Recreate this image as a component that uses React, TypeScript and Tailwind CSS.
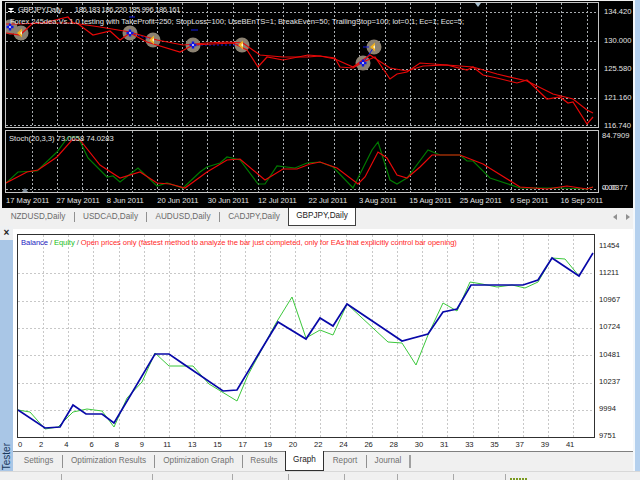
const priceLabels = ["134.420", "130.000", "125.580", "121.160", "116.740"]
const dates = ["17 May 2011", "27 May 2011", "8 Jun 2011", "20 Jun 2011", "30 Jun 2011", "12 Jul 2011", "22 Jul 2011", "3 Aug 2011", "15 Aug 2011", "25 Aug 2011", "6 Sep 2011", "16 Sep 2011"]
const symbolTabs = [
  { name: "NZDUSD,Daily", w: "w-[72px]" },
  { name: "USDCAD,Daily", w: "w-[71px]" },
  { name: "AUDUSD,Daily", w: "w-[72px]" },
  { name: "CADJPY,Daily", w: "w-[68px]" },
]
const balanceLabels = ["11454", "11211", "10967", "10724", "10481", "10237", "9994", "9751"]
const tradeLabels = ["2", "4", "6", "8", "9", "11", "13", "15", "17", "19", "20", "22", "24", "26", "28", "30", "31", "33", "35", "37", "39", "41"]
const statusCells = ["w-[62px]", "w-[91px]", "w-[80px]", "w-[56px]", "w-[56px]", "w-[53px]", "w-[56px]", "w-[52px]"]

const gridX = [32, 57, 82, 107, 132, 157, 182, 207, 233, 258, 283, 308, 334, 359, 385, 410, 435, 460, 486, 511, 536, 561, 587]
const testerGridX = [43, 68, 93, 119, 144, 169, 194, 220, 245, 270, 295, 320, 346, 372, 397, 422, 447, 473, 498, 523, 548, 573]
const testerGridY = [273, 301, 328, 355, 383, 410]

const priceA = "6,24 17,24 43,23 68,17 73,23 100,27 130,32 157,40 183,45 207,43 227,42 243,43 260,55 283,57 308,57 320,56 335,59 353,67 370,55 390,68 407,71 423,66 447,65 473,67 497,74 527,81 553,94 573,99 587,110 593,113"
const priceB = "6,33 20,35 33,23 77,23 93,35 110,31 120,40 130,33 147,42 180,52 193,45 233,43 247,50 258,67 267,57 283,60 308,55 320,56 335,58 340,67 353,68 363,62 375,57 390,79 397,74 407,72 420,63 447,65 467,70 473,67 483,75 497,78 517,83 527,80 547,99 560,97 568,103 573,102 587,124 593,117"
const stochGreen = "6,183 18,172 37,171 57,152 68,137 78,137 88,158 107,177 113,176 120,182 138,168 157,186 167,183 183,188 200,172 207,167 220,163 227,157 240,160 258,184 265,184 277,166 295,168 307,163 320,162 333,167 353,188 372,150 378,142 390,180 397,184 407,178 428,150 440,155 460,155 467,161 473,161 490,178 520,188 533,188 560,188 587,189 593,187"
const stochRed = "6,183 27,172 38,170 57,157 72,140 80,140 100,165 120,178 140,172 157,183 170,184 185,188 207,172 227,160 240,159 265,180 283,169 297,169 310,164 320,162 337,168 358,184 365,177 378,152 387,158 397,175 407,178 420,167 432,155 460,155 483,164 520,187 547,189 567,186 587,189 593,187"
const balance = "18,410 45,428 60,427 73,405 86,414 102,414 114,423 155,354 169,354 182,363 223,391 237,390 258,355 278,322 306,339 320,318 333,326 347,304 402,341 428,334 443,312 457,309 471,285 523,285 538,280 552,258 579,276 593,253"
const equity = "18,410 30,412 45,429 58,427 73,412 87,409 102,411 114,427 127,398 142,382 155,353 169,366 193,366 209,384 237,401 248,375 276,323 292,297 306,338 320,330 333,335 347,304 388,342 402,343 416,365 428,335 443,303 457,311 470,282 482,284 497,287 512,285 525,288 538,282 552,258 565,259 579,276"

function BlueMark({ x, y }: { x: number; y: number }) {
  return (
    <g>
      <path d={`M${x - 3.5} ${y}H${x + 3.5}M${x} ${y - 3.5}V${y + 3.5}`} stroke="#0a14e6" strokeWidth="2.4" />
      <circle cx={x} cy={y} r="0.9" fill="#ffffff" />
    </g>
  )
}

function SellMark({ x, y }: { x: number; y: number }) {
  return (
    <g>
      <polygon points={`${x - 3},${y} ${x + 2},${y - 4.5} ${x + 2},${y + 4.5}`} fill="#f0b020" />
      <polygon points={`${x},${y} ${x + 2},${y - 2} ${x + 2},${y + 2}`} fill="#fff4c0" />
    </g>
  )
}

function PriceChart() {
  const circles = [[10, 27], [21, 33], [130, 33], [153, 40], [193, 45], [242, 45], [363, 63], [374, 47]]
  return (
    <svg width="592" height="124" viewBox="6 3 592 124" className="block">
      {gridX.map((x) => <line key={x} x1={x + 0.5} x2={x + 0.5} y1="3" y2="127" stroke="#a8acb0" strokeDasharray="2 2" />)}
      {[12, 41, 69, 98, 125].map((y) => <line key={y} x1="6" x2="598" y1={y + 0.5} y2={y + 0.5} stroke="#a8acb0" strokeDasharray="2 2" />)}
      {circles.map(([x, y]) => <circle key={x} cx={x} cy={y} r="7.5" fill="#8c8272" />)}
      <path d="M130 33L153 40M193 45H242" stroke="#1018e0" strokeDasharray="2 2" fill="none" />
      <path d="M191 30H198M129 17H135M363 47H369M363 63L374 47" stroke="#1018e0" fill="none" />
      <polyline points={priceA} fill="none" stroke="#e80808" strokeWidth="1.2" />
      <polyline points={priceB} fill="none" stroke="#e80808" strokeWidth="1.2" />
      <BlueMark x={10} y={27} />
      <SellMark x={20} y={33} />
      <BlueMark x={130} y={33} />
      <SellMark x={152} y={40} />
      <BlueMark x={193} y={45} />
      <SellMark x={241} y={45} />
      <BlueMark x={363} y={63} />
      <SellMark x={373} y={47} />
      <polygon points="475,3 481,3 478,7" fill="#a8c0d0" />
    </svg>
  )
}

function StochChart() {
  return (
    <svg width="592" height="61" viewBox="6 131 592 61" className="block">
      {gridX.map((x) => <line key={x} x1={x + 0.5} x2={x + 0.5} y1="131" y2="192" stroke="#a8acb0" strokeDasharray="2 2" />)}
      <line x1="6" x2="598" y1="189.5" y2="189.5" stroke="#a8acb0" strokeDasharray="2 2" />
      <polygon points="22,192 28,192 25,188" fill="#8090a0" />
      <polyline points={stochGreen} fill="none" stroke="#007a00" strokeWidth="1.2" />
      <polyline points={stochRed} fill="none" stroke="#e80808" strokeWidth="1.2" />
    </svg>
  )
}

function TesterChart() {
  return (
    <svg width="576" height="202" viewBox="18 235 576 202" className="block">
      {testerGridX.map((x) => <line key={x} x1={x + 0.5} x2={x + 0.5} y1="235" y2="437" stroke="#c8c8c8" strokeDasharray="2 2" />)}
      {testerGridY.map((y) => <line key={y} x1="18" x2="594" y1={y + 0.5} y2={y + 0.5} stroke="#c8c8c8" strokeDasharray="2 2" />)}
      <polyline points={equity} fill="none" stroke="#3cc83c" strokeWidth="1" />
      <polyline points={balance} fill="none" stroke="#0808a8" strokeWidth="1.7" />
    </svg>
  )
}

export default function App() {
  return (
    <div className="flex h-[480px] w-[640px] flex-col overflow-hidden bg-[#f0f0f0] font-['Liberation_Sans',sans-serif] text-[7.6px]">
      <div className="flex h-[471px] shrink-0">
        <div className="flex w-[633px] shrink-0 flex-col">
          <div className="ml-[2px] mt-[1px] flex h-[207px] shrink-0 flex-col bg-black pl-[3px] pt-[1px] text-[#e4e4e4]">
            <div className="flex h-[126px] shrink-0">
              <div className="relative h-[126px] w-[594px] shrink-0 border border-[#c4c4c4]">
                <PriceChart />
                <div className="absolute left-[2px] top-[1px] flex items-center whitespace-nowrap tracking-[-0.35px]">
                  <span className="block h-[4px] w-[6px] border-b border-white">
                    <svg width="6" height="3" viewBox="0 0 6 3" className="block"><polygon points="0,0 6,0 3,3" fill="#ffffff" /></svg>
                  </span>
                  <span className="ml-[4px]">GBPJPY,Daily</span>
                  <span className="ml-[13px]">186.183 186.220 185.996 186.161</span>
                </div>
                <div className="absolute left-[4px] top-[13px] whitespace-nowrap tracking-[-0.04px]">Forex 245dea Vs.1.0 testing with TakeProfit=250; StopLoss=100; UseBEnTS=1; BreakEven=50; TrailingStop=100; lot=0.1; Ec=1; Ecc=5;</div>
              </div>
              <div className="ml-[5px] mt-[5px] flex h-[123px] flex-col justify-between leading-[9px]">
                {priceLabels.map((p) => <span key={p}>{p}</span>)}
              </div>
            </div>
            <div className="mt-[2px] flex h-[63px] shrink-0">
              <div className="relative h-[63px] w-[594px] shrink-0 border border-[#c4c4c4]">
                <StochChart />
                <div className="absolute left-[3px] top-[2px] whitespace-nowrap">Stoch(20,3,3) 73.0658 74.0283</div>
              </div>
              <div className="relative ml-[3px] flex h-[62px] flex-col justify-between pt-[1px] leading-[9px]">
                <span>84.7909</span>
                <span>-0.0377</span>
                <span className="absolute bottom-0 left-0">0.00</span>
              </div>
            </div>
            <div className="ml-[1px] mt-[3px] grid w-[605px] grid-cols-12 leading-[10px] whitespace-nowrap">
              {dates.map((d) => <span key={d}>{d}</span>)}
            </div>
          </div>

          <div className="flex h-[18px] shrink-0 items-stretch pl-[2px] text-[8.2px] text-[#6a6a6a]">
            {symbolTabs.map((t) => (
              <div key={t.name} className="flex shrink-0 items-stretch">
                <div className={`${t.w} flex items-center justify-center`}>{t.name}</div>
                <span className="my-[4px] w-px bg-[#909090]" />
              </div>
            ))}
            <div className="ml-[-1px] flex w-[68px] shrink-0 items-center justify-center border border-t-0 border-[#404040] bg-white text-[#1c1c1c]">GBPJPY,Daily</div>
            <div className="ml-auto mr-[3px] flex items-center gap-[9px]">
              <svg width="4" height="6" viewBox="0 0 4 6"><polygon points="4,0 4,6 0,3" fill="#909090" /></svg>
              <svg width="4" height="6" viewBox="0 0 4 6"><polygon points="0,0 0,6 4,3" fill="#909090" /></svg>
            </div>
          </div>

          <div className="flex min-h-0 flex-1">
            <div className="flex w-[13px] shrink-0 flex-col">
              <div className="flex h-[14px] shrink-0 items-center justify-center bg-[#eef0f2] text-[10px] font-bold leading-none text-[#222222]">×</div>
              <div className="flex flex-1 items-end justify-center bg-[#a9c6e6] pb-[1px]">
                <span className="rotate-180 text-[10px] leading-none text-[#17375c] [writing-mode:vertical-rl]">Tester</span>
              </div>
            </div>
            <div className="flex min-w-0 flex-1 flex-col">
              <div className="flex h-[225px] shrink-0 flex-col border-t-[3px] border-[#f0f0f0] bg-white pl-[4px] pt-[5px] text-[#222222]">
                <div className="flex h-[204px] shrink-0">
                  <div className="relative h-[204px] w-[578px] shrink-0 border border-[#303030]">
                    <TesterChart />
                    <div className="absolute left-[3px] top-[2px] whitespace-nowrap tracking-[-0.08px] text-[#ff2a2a]">
                      <span className="text-[#2222c0]">Balance</span>
                      <span className="text-[#666666]"> / </span>
                      <span className="text-[#22c022]">Equity</span>
                      <span className="text-[#666666]"> / </span>
                      Open prices only (fastest method to analyze the bar just completed, only for EAs that explicitly control bar opening)
                    </div>
                  </div>
                  <div className="ml-[4px] mt-[7px] flex h-[199px] flex-col justify-between leading-[9px]">
                    {balanceLabels.map((b) => <span key={b}>{b}</span>)}
                  </div>
                </div>
                <div className="mt-[2px] flex pl-[1px] leading-[10px]">
                  <span className="w-[10.6px] shrink-0">0</span>
                  {tradeLabels.map((n, i) => <span key={i} className="w-[25.2px] shrink-0 text-center">{n}</span>)}
                </div>
              </div>
              <div className="flex flex-1 items-stretch border-t border-[#808080] pl-[2px] text-[8.2px] text-[#707070]">
                <div className="flex w-[47px] shrink-0 items-center justify-center">Settings</div>
                <span className="my-[3px] w-px bg-[#909090]" />
                <div className="flex w-[91px] shrink-0 items-center justify-center">Optimization Results</div>
                <span className="my-[3px] w-px bg-[#909090]" />
                <div className="flex w-[87px] shrink-0 items-center justify-center">Optimization Graph</div>
                <span className="my-[3px] w-px bg-[#909090]" />
                <div className="flex w-[42px] shrink-0 items-center justify-center">Results</div>
                <div className="mt-[-1px] flex w-[39px] shrink-0 items-center justify-center border border-t-0 border-[#303030] bg-white text-[#1c1c1c]">Graph</div>
                <div className="flex w-[42px] shrink-0 items-center justify-center">Report</div>
                <span className="my-[3px] w-px bg-[#909090]" />
                <div className="flex w-[42px] shrink-0 items-center justify-center">Journal</div>
                <span className="my-[3px] w-[2px] bg-[#a0a0a0]" />
              </div>
            </div>
          </div>
        </div>
        <div className="w-[7px] shrink-0 border-l-2 border-[#f4f8fc] bg-[#b4d0ee]" />
      </div>

      <div className="flex flex-1 items-stretch border-t border-[#d8d8d8] pt-[2px]">
        {statusCells.map((w, i) => <div key={i} className={`${w} shrink-0 border-r border-[#a8a8a8]`} />)}
        <div className="ml-[4px] mt-[4px] flex h-[3px] gap-px">
          {[0, 1, 2, 3, 4, 5].map((i) => <span key={i} className="w-[2px] bg-[#7a9a20]" />)}
        </div>
      </div>
    </div>
  )
}
